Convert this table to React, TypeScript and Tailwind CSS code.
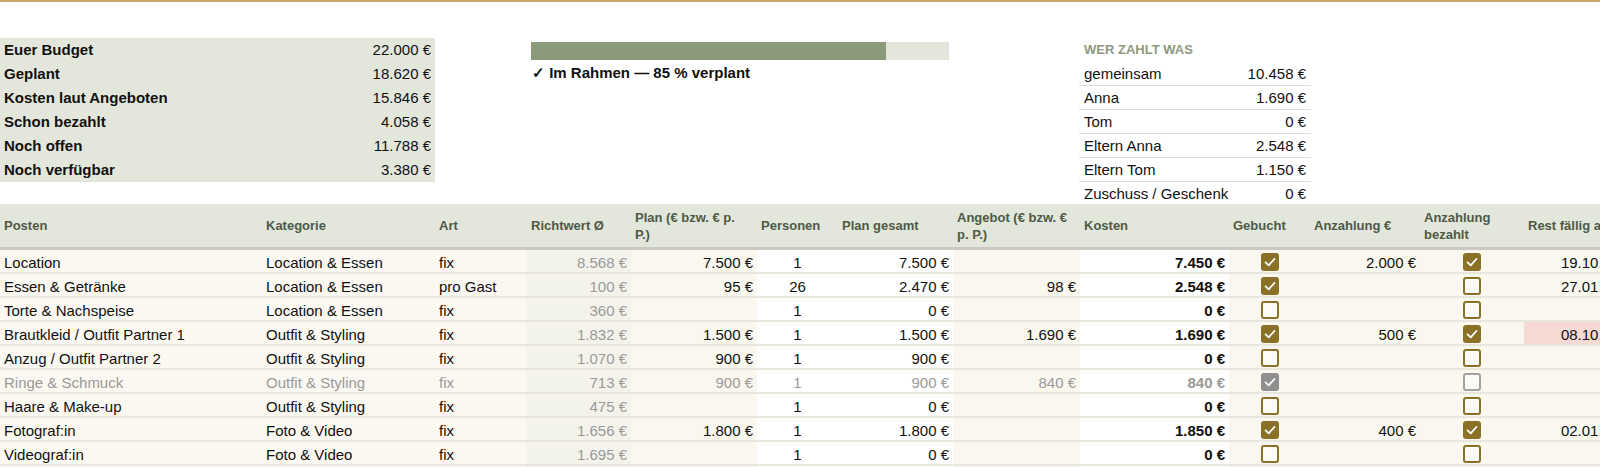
import React from "react";

type Cell = string | boolean | null;

interface Row {
  cells: Cell[];
  muted?: boolean;
  overdue?: boolean;
}

const summary = [
  ["Euer Budget", "22.000 €"],
  ["Geplant", "18.620 €"],
  ["Kosten laut Angeboten", "15.846 €"],
  ["Schon bezahlt", "4.058 €"],
  ["Noch offen", "11.788 €"],
  ["Noch verfügbar", "3.380 €"],
];

const payers = [
  ["gemeinsam", "10.458 €"],
  ["Anna", "1.690 €"],
  ["Tom", "0 €"],
  ["Eltern Anna", "2.548 €"],
  ["Eltern Tom", "1.150 €"],
  ["Zuschuss / Geschenk", "0 €"],
];

// column layout: label, alignment and cell background
const columns = [
  { label: "Posten", align: "text-left", bg: "bg-[#faf8f1]" },
  { label: "Kategorie", align: "text-left", bg: "bg-[#faf8f1]" },
  { label: "Art", align: "text-left", bg: "bg-[#faf8f1]" },
  { label: "Richtwert Ø", align: "text-right", bg: "bg-[#f3f2eb]" },
  { label: "Plan (€ bzw. € p. P.)", align: "text-right", bg: "bg-[#faf7ee]" },
  { label: "Personen", align: "text-center", bg: "bg-white" },
  { label: "Plan gesamt", align: "text-right", bg: "bg-white" },
  { label: "Angebot (€ bzw. € p. P.)", align: "text-right", bg: "bg-[#faf7ee]" },
  { label: "Kosten", align: "text-right", bg: "bg-white" },
  { label: "Gebucht", align: "text-center", bg: "bg-[#faf7ee]" },
  { label: "Anzahlung €", align: "text-right", bg: "bg-[#faf7ee]" },
  { label: "Anzahlung bezahlt", align: "text-center", bg: "bg-[#faf7ee]" },
  { label: "Rest fällig am", align: "text-right", bg: "bg-[#faf7ee]" },
];

const rows: Row[] = [
  { cells: ["Location", "Location & Essen", "fix", "8.568 €", "7.500 €", "1", "7.500 €", "", "7.450 €", true, "2.000 €", true, "19.10.2025"] },
  { cells: ["Essen & Getränke", "Location & Essen", "pro Gast", "100 €", "95 €", "26", "2.470 €", "98 €", "2.548 €", true, "", false, "27.01.2026"] },
  { cells: ["Torte & Nachspeise", "Location & Essen", "fix", "360 €", "", "1", "0 €", "", "0 €", false, "", false, ""] },
  { cells: ["Brautkleid / Outfit Partner 1", "Outfit & Styling", "fix", "1.832 €", "1.500 €", "1", "1.500 €", "1.690 €", "1.690 €", true, "500 €", true, "08.10.2025"], overdue: true },
  { cells: ["Anzug / Outfit Partner 2", "Outfit & Styling", "fix", "1.070 €", "900 €", "1", "900 €", "", "0 €", false, "", false, ""] },
  { cells: ["Ringe & Schmuck", "Outfit & Styling", "fix", "713 €", "900 €", "1", "900 €", "840 €", "840 €", true, "", false, ""], muted: true },
  { cells: ["Haare & Make-up", "Outfit & Styling", "fix", "475 €", "", "1", "0 €", "", "0 €", false, "", false, ""] },
  { cells: ["Fotograf:in", "Foto & Video", "fix", "1.656 €", "1.800 €", "1", "1.800 €", "", "1.850 €", true, "400 €", true, "02.01.2026"] },
  { cells: ["Videograf:in", "Foto & Video", "fix", "1.695 €", "", "1", "0 €", "", "0 €", false, "", false, ""] },
  { cells: ["DJ / Musik", "Musik & Unterhaltung", "fix", "1.250 €", "", "1", "0 €", "", "0 €", false, "", false, ""] },
];

const gridCols =
  "grid grid-cols-[262px_173px_92px_104px_126px_81px_115px_127px_149px_81px_110px_104px_116px]";

function Checkbox({ checked, muted }: { checked: boolean; muted?: boolean }) {
  if (checked) {
    return (
      <span
        className={`inline-flex h-[18px] w-[18px] items-center justify-center rounded-[3px] ${
          muted ? "bg-[#8f8f8f]" : "bg-[#8b7128]"
        }`}
      >
        <svg viewBox="0 0 18 18" className="h-[18px] w-[18px]">
          <path d="M4.6 9.4 L7.7 12.3 L13.4 6" fill="none" stroke="white" strokeWidth="1.8" strokeLinecap="round" strokeLinejoin="round" />
        </svg>
      </span>
    );
  }
  return (
    <span
      className={`inline-block h-[18px] w-[18px] rounded-[3px] border-2 bg-[#fdfbf5] ${
        muted ? "border-[#a3a3a3]" : "border-[#8b7128]"
      }`}
    />
  );
}

export default function App() {
  return (
    <div className="h-screen w-screen overflow-hidden bg-white font-['Liberation_Sans',Arial,sans-serif] text-[15px] text-[#111]">
      <div className="h-[2px] bg-[#c9a46b]" />

      {/* Top overview */}
      <div className="flex h-[202px] items-start pt-[36px]">
        <div className="w-[435px] bg-[#e3e6da]">
          {summary.map(([label, value]) => (
            <div key={label} className="flex h-6 items-center justify-between px-1 leading-6">
              <span className="font-bold">{label}</span>
              <span>{value}</span>
            </div>
          ))}
        </div>

        <div className="ml-[96px] w-[418px] pt-1">
          <div className="flex h-[18px] bg-[#e3e6da]">
            <div className="h-full w-[85%] bg-[#8b9a7b]" />
          </div>
          <div className="h-6 pl-px pt-px leading-6 font-bold">✓ Im Rahmen — 85 % verplant</div>
        </div>

        <div className="ml-[130px] w-[232px]">
          <div className="h-6 px-[5px] text-[13px] font-bold leading-6 text-[#8d9a80]">WER ZAHLT WAS</div>
          {payers.map(([name, value], i) => (
            <div
              key={name}
              className={`flex h-6 items-center justify-between px-[5px] leading-6 ${
                i < payers.length - 1 ? "border-b border-[#dedede]" : ""
              }`}
            >
              <span>{name}</span>
              <span>{value}</span>
            </div>
          ))}
        </div>
      </div>

      {/* Budget table */}
      <div className="w-[1640px]">
        <div className={`${gridCols} h-[46px] border-b-[3px] border-[#c9c9c2] bg-[#e3e6da]`}>
          {columns.map((c) => (
            <div
              key={c.label}
              className="flex items-center px-1 text-[13px] font-bold leading-[17px] text-[#4d5a47]"
            >
              {c.label}
            </div>
          ))}
        </div>

        {rows.map((row) => (
          <div
            key={row.cells[0] as string}
            className={`${gridCols} border-b-2 border-[#e9e6dd] ${row.muted ? "text-[#9a9a9a]" : ""}`}
          >
            {row.cells.map((cell, i) => {
              const col = columns[i];
              const bg = row.overdue && i === 12 ? "bg-[#f6d9d3]" : col.bg;
              if (typeof cell === "boolean") {
                return (
                  <div key={i} className={`flex h-[22px] items-start justify-center pt-[3px] ${bg}`}>
                    <Checkbox checked={cell} muted={row.muted} />
                  </div>
                );
              }
              return (
                <div
                  key={i}
                  className={`h-[22px] truncate px-1 pt-[4px] leading-[18px] ${col.align} ${bg} ${
                    i === 3 ? "text-[#9a9a9a]" : ""
                  } ${i === 8 ? "font-bold" : ""}`}
                >
                  {cell}
                </div>
              );
            })}
          </div>
        ))}
      </div>
    </div>
  );
}
